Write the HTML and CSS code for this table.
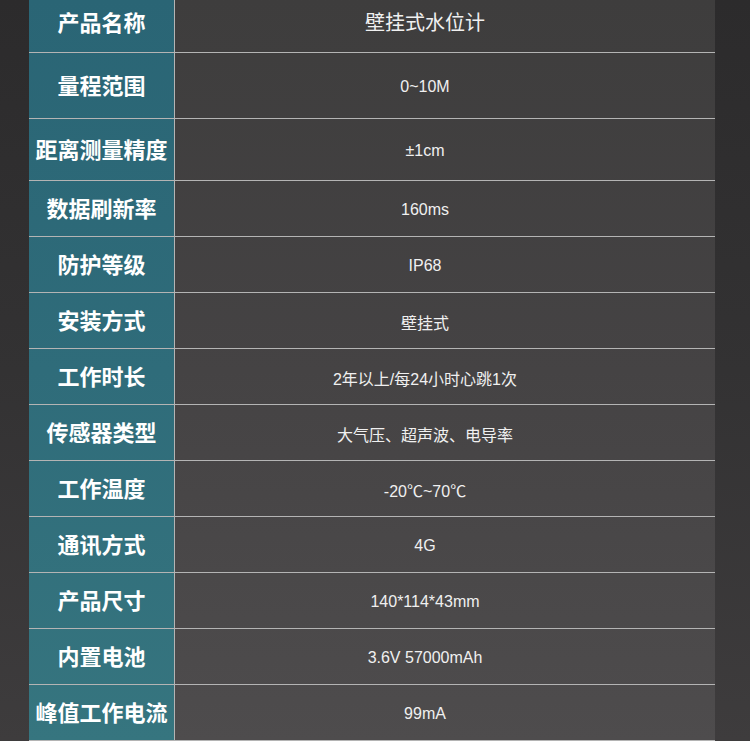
FILE: index.html
```html
<!DOCTYPE html>
<html lang="zh-CN">
<head>
<meta charset="utf-8">
<title>壁挂式水位计 参数</title>
<link rel="stylesheet" href="styles.css">
</head>
<body>
<div class="page">
  <div class="spec">
    <div class="row row-first"><div class="label">产品名称</div><div class="value value-lg">壁挂式水位计</div></div>
    <div class="row row-2"><div class="label">量程范围</div><div class="value">0~10M</div></div>
    <div class="row row-3"><div class="label">距离测量精度</div><div class="value">±1cm</div></div>
    <div class="row"><div class="label">数据刷新率</div><div class="value">160ms</div></div>
    <div class="row"><div class="label">防护等级</div><div class="value">IP68</div></div>
    <div class="row"><div class="label">安装方式</div><div class="value">壁挂式</div></div>
    <div class="row"><div class="label">工作时长</div><div class="value">2年以上/每24小时心跳1次</div></div>
    <div class="row"><div class="label">传感器类型</div><div class="value">大气压、超声波、电导率</div></div>
    <div class="row"><div class="label">工作温度</div><div class="value">-20℃~70℃</div></div>
    <div class="row"><div class="label">通讯方式</div><div class="value">4G</div></div>
    <div class="row"><div class="label">产品尺寸</div><div class="value">140*114*43mm</div></div>
    <div class="row"><div class="label">内置电池</div><div class="value">3.6V 57000mAh</div></div>
    <div class="row"><div class="label">峰值工作电流</div><div class="value">99mA</div></div>
  </div>
</div>
</body>
</html>
```

FILE: styles.css
```css
html, body {
  margin: 0;
  padding: 0;
}
body {
  width: 750px;
  height: 741px;
  overflow: hidden;
  background: linear-gradient(180deg, #2c2b2c 0%, #333233 50%, #3e3c3d 100%);
  font-family: "Liberation Sans", "Noto Sans CJK SC", sans-serif;
}
.page {
  padding: 0 35px 0 29px;
}
.spec {
  display: flex;
  flex-direction: column;
  background: linear-gradient(180deg, #3e3d3d 0%, #454344 50%, #4e4c4d 100%);
  position: relative;
}
.spec::before {
  content: "";
  position: absolute;
  left: 0;
  top: 0;
  bottom: 0;
  width: 145px;
  background: linear-gradient(180deg, #2a6575 0%, #2f6c7a 50%, #36757f 100%);
}
.row {
  position: relative;
  display: grid;
  grid-template-columns: 146px 1fr;
  height: 56px;
  box-sizing: border-box;
  border-bottom: 1px solid #b4b4b4;
}
.row-first { height: 53px; }
.row-2 { height: 66px; }
.row-3 { height: 62px; }
.label {
  display: flex;
  align-items: center;
  justify-content: center;
  border-right: 1px solid #b4b4b4;
  color: #ffffff;
  font-family: "Noto Sans CJK SC", sans-serif;
  font-weight: 700;
  font-size: 22px;
  white-space: nowrap;
  padding-bottom: 3px;
}
.value {
  display: flex;
  align-items: center;
  justify-content: center;
  color: #f0f0f0;
  font-size: 16px;
  white-space: nowrap;
  padding-right: 40px;
  padding-top: 3px;
}
.value-lg {
  font-size: 20px;
}
.row-first .label,
.row-first .value {
  padding-top: 0;
  padding-bottom: 10px;
}
```
